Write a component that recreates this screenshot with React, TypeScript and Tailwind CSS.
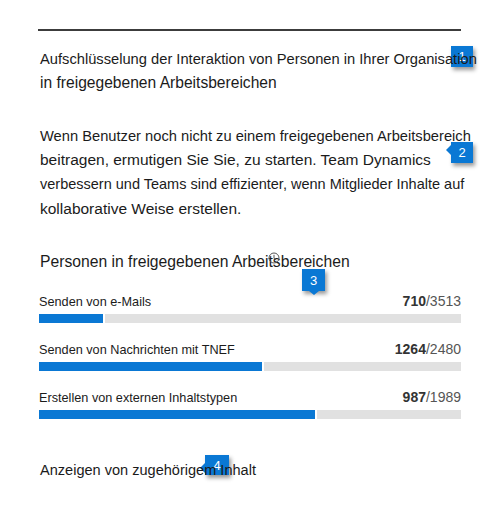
import React from "react";

type Row = { label: string; value: number; total: number; fill: number };

const rows: Row[] = [
  { label: "Senden von e-Mails", value: 710, total: 3513, fill: 64 },
  { label: "Senden von Nachrichten mit TNEF", value: 1264, total: 2480, fill: 223 },
  { label: "Erstellen von externen Inhaltstypen", value: 987, total: 1989, fill: 276 },
];

function Callout({ n, className, arrow }: { n: number; className: string; arrow?: "left" | "down" | "leftLow" }) {
  return (
    <div className={`absolute ${className}`}>
      <div className="relative w-full h-full bg-[#0a78d4] shadow-[2px_3px_4px_rgba(0,0,0,0.4)] flex items-center justify-center text-white text-[13px] leading-none font-['Liberation_Sans',sans-serif]">
        {n}
        {arrow === "left" && (
          <div className="absolute -left-[5px] top-[3px] w-0 h-0 border-y-[5px] border-y-transparent border-r-[5px] border-r-[#0a78d4]" />
        )}
        {arrow === "leftLow" && (
          <div className="absolute -left-[5px] top-[8px] w-0 h-0 border-y-[5px] border-y-transparent border-r-[5px] border-r-[#0a78d4]" />
        )}
        {arrow === "down" && (
          <div className="absolute left-1/2 -translate-x-1/2 -bottom-[4px] w-0 h-0 border-x-[5px] border-x-transparent border-t-[4px] border-t-[#0a78d4]" />
        )}
      </div>
    </div>
  );
}

export default function App() {
  return (
    <div className="relative w-[500px] h-[510px] bg-white overflow-hidden font-['Liberation_Sans',Arial,sans-serif] text-[#1b1b1b]">
      {/* numbered callouts sit under the text */}
      <Callout n={1} className="left-[451px] top-[46px] w-[22px] h-[21px]" />
      <Callout n={2} arrow="left" className="left-[451px] top-[142px] w-[22px] h-[21px]" />
      <Callout n={3} arrow="down" className="left-[302px] top-[269px] w-[23px] h-[22px]" />
      <Callout n={4} arrow="leftLow" className="left-[205px] top-[455px] w-[24px] h-[20px]" />

      <div className="ml-[38px] w-[423px] pt-[29px]">
        <div className="border-t-2 border-[#3c3c3c]" />

        {/* intro title */}
        <div className="relative mt-4 whitespace-nowrap pl-[2px]">
          <div className="text-[14.7px] leading-[24px]">Aufschlüsselung der Interaktion von Personen in Ihrer Organisation</div>
          <div className="text-[15.6px] leading-[24px]">in freigegebenen Arbeitsbereichen</div>
        </div>

        {/* description */}
        <div className="relative mt-[29px] whitespace-nowrap pl-[2px]">
          <div className="text-[14.7px] leading-[24px]">Wenn Benutzer noch nicht zu einem freigegebenen Arbeitsbereich</div>
          <div className="text-[15.5px] leading-[24px]">beitragen, ermutigen Sie Sie, zu starten. Team Dynamics</div>
          <div className="text-[14.5px] leading-[24px]">verbessern und Teams sind effizienter, wenn Mitglieder Inhalte auf</div>
          <div className="text-[15.5px] leading-[26px]">kollaborative Weise erstellen.</div>
        </div>

        {/* people in shared workspaces */}
        <div className="relative mt-[28px] pl-[2px] text-[15.7px] leading-[24px] whitespace-nowrap">
          Personen in freigegebenen Arbeitsbereichen
          <svg className="absolute left-[230px] top-[2px]" width="12" height="12" viewBox="0 0 12 12" fill="none">
            <circle cx="6" cy="6" r="5" stroke="#555" strokeWidth="1" />
            <path d="M6 3.2v3.2l2 1.2" stroke="#555" strokeWidth="1" strokeLinecap="round" />
          </svg>
        </div>

        <div className="relative mt-[17px] flex flex-col gap-4">
          {rows.map((r) => (
            <div key={r.label}>
              <div className="flex items-baseline justify-between h-[20px] pl-[1px]">
                <span className="text-[12.7px] leading-[20px]">{r.label}</span>
                <span className="text-[14px] leading-[20px] text-[#555]">
                  <b className="text-[#333]">{r.value}</b>/{r.total}
                </span>
              </div>
              <div className="mt-[3px] flex h-[9px] gap-[2px] pl-[1px]">
                <div className="bg-[#0a78d4]" style={{ width: r.fill }} />
                <div className="flex-1 bg-[#e1e1e1]" />
              </div>
            </div>
          ))}
        </div>

        <div className="relative mt-[39px] pl-[2px] text-[14.55px] leading-[24px] whitespace-nowrap">
          Anzeigen von zugehörigem Inhalt
        </div>
      </div>
    </div>
  );
}
